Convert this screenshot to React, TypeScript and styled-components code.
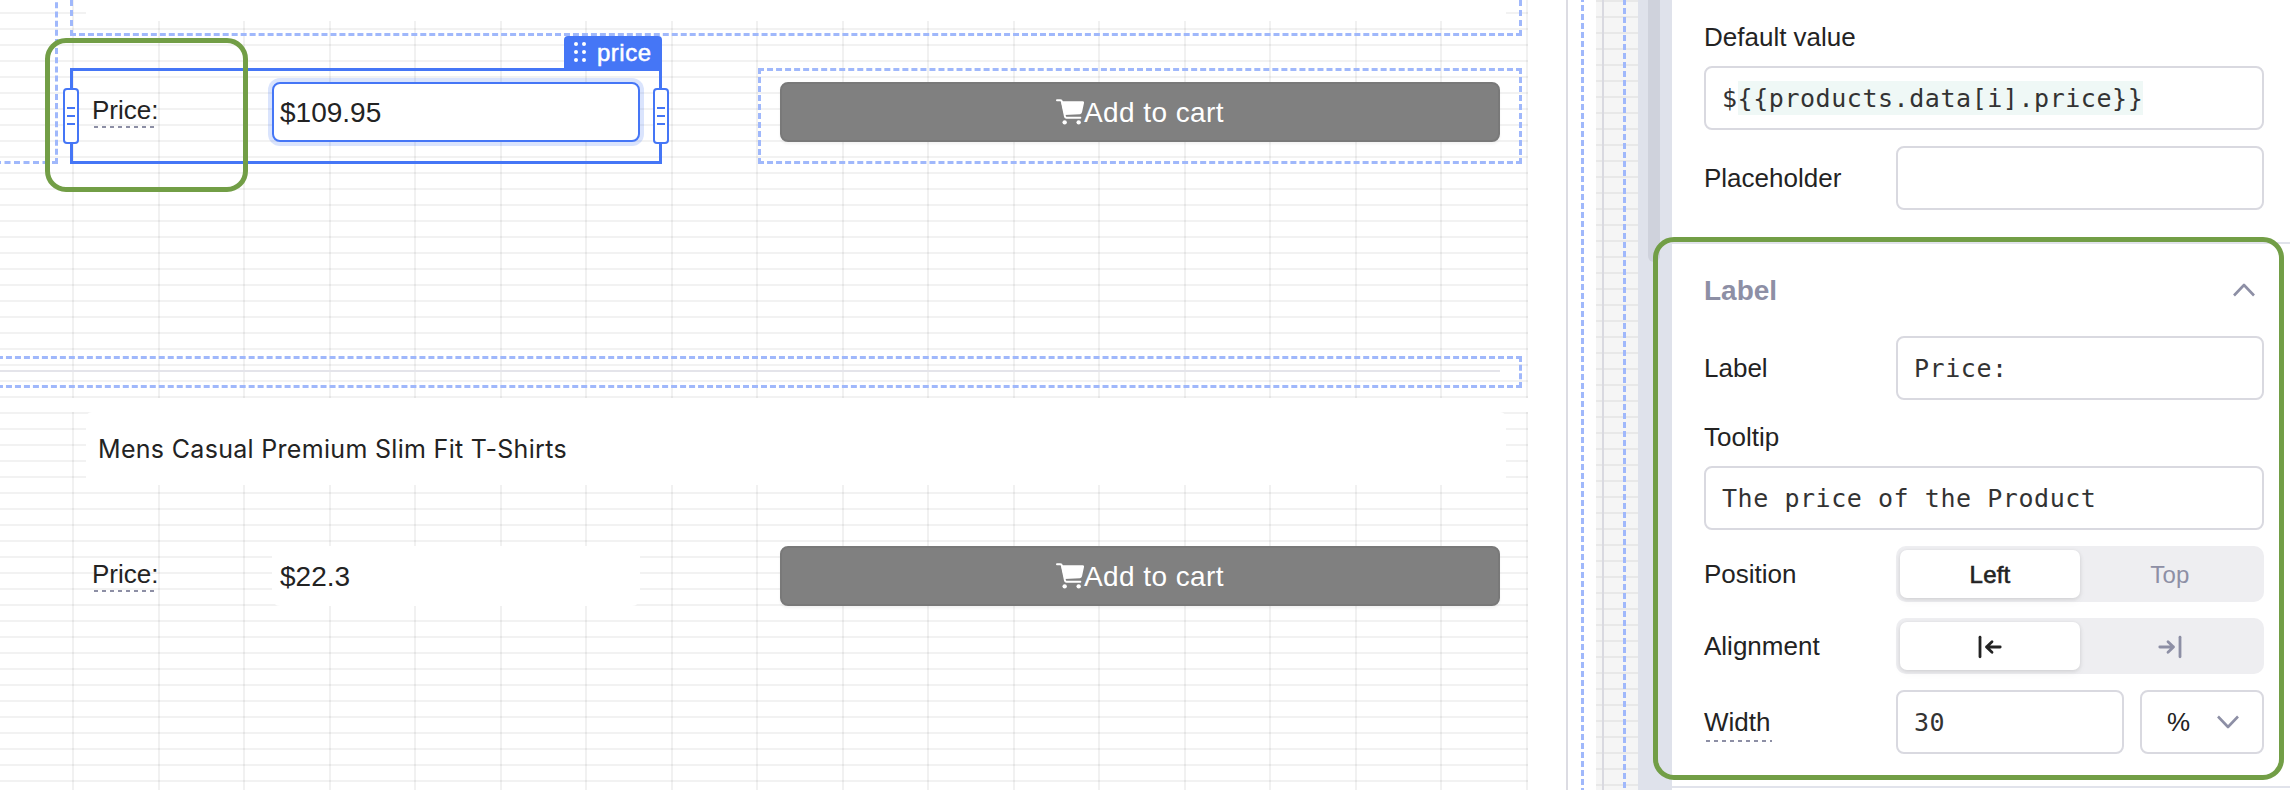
import React from "react";
import styled, { createGlobalStyle, css } from "styled-components";

const BLUE = "#4576f6";
const DASH = "#a0b8fb";
const GREEN = "#729e46";
const MUTED = "#8d8fa5";
const INK = "#232323";
const LINE = "#d9d9e0";

const GlobalStyle = createGlobalStyle`
  * { box-sizing: border-box; }
  body {
    margin: 0;
    overflow: hidden;
    background: #fff;
    color: ${INK};
    font-family: "Liberation Sans", Arial, sans-serif;
    font-size: 26px;
    line-height: 30px;
  }
`;

const Editor = styled.div`
  position: relative;
  display: flex;
  width: 2290px;
  height: 790px;
  overflow: hidden;
`;

/* ---------- Canvas ---------- */

const Canvas = styled.main`
  display: flex;
  flex-direction: column;
  gap: 14px;
  width: 1568px;
  border-right: 2px solid #dcdce3;
`;

const ListItem = styled.section<{ $height: number; $gridOffset: number }>`
  position: relative;
  z-index: 0;
  flex: none;
  width: 1528px;
  height: ${(p) => p.$height}px;
  overflow: hidden;
  background-image: linear-gradient(#f2f2f2 2px, transparent 2px);
  background-size: 100% 16px;
  background-position: 0 ${(p) => p.$gridOffset}px;
`;

const GridColumns = styled.div`
  position: absolute;
  z-index: -1;
  inset: 0 0 0 72px;
  display: flex;
  justify-content: space-between;
`;

const GridColumn = styled.i`
  width: 2px;
  background: rgba(0, 0, 0, 0.055);
`;

const widgetBorder = css<{ $outlined?: boolean }>`
  border: 3px dashed ${(p) => (p.$outlined ? DASH : "transparent")};
`;

const TitleWidget = styled.div<{ $height: number; $outlined?: boolean }>`
  ${widgetBorder}
  display: flex;
  width: 1452px;
  height: ${(p) => p.$height}px;
  margin-left: 70px;
  padding: 0 13px 12px;
  border-top: 0;
`;

const TitleText = styled.div`
  flex: 1;
  display: flex;
  align-items: center;
  padding: 0 0 0 12px;
  border-radius: 6px 6px 0 0;
  background: #fff;
  font-family: Inter, sans-serif;
  font-size: 25px;
  letter-spacing: 0.31px;
  white-space: nowrap;
`;

const WidgetRow = styled.div`
  display: flex;
  gap: 96px;
  height: 96px;
  margin: 32px 0 0 70px;
`;

const PriceWidget = styled.div<{ $selected?: boolean }>`
  position: relative;
  display: flex;
  align-items: center;
  width: 592px;
  padding: 11px 19px 19px;
  border: 3px solid ${(p) => (p.$selected ? BLUE : "transparent")};
`;

const PriceLabel = styled.div`
  width: 180px;
`;

const HintedText = styled.span<{ $pad: number; $drop: number; $trim: number }>`
  position: relative;
  display: inline-block;
  padding-bottom: ${(p) => p.$pad}px;
  vertical-align: top;

  &::after {
    content: "";
    position: absolute;
    left: 2px;
    right: ${(p) => p.$trim}px;
    bottom: ${(p) => p.$drop}px;
    height: 2px;
    background: repeating-linear-gradient(90deg, ${MUTED} 0 4px, transparent 4px 8px);
  }
`;

const PriceInput = styled.div<{ $focused?: boolean }>`
  flex: 1;
  display: flex;
  align-items: center;
  height: 60px;
  padding: 1px 6px 0;
  border: 2px solid ${(p) => (p.$focused ? BLUE : "#fff")};
  border-radius: 8px;
  background: #fff;
  box-shadow: ${(p) => (p.$focused ? "0 0 0 4px rgba(69, 118, 246, 0.2)" : "none")};
  font-size: 28px;
`;

const ButtonWidget = styled.div<{ $outlined?: boolean }>`
  ${widgetBorder}
  width: 764px;
  padding: 11px 19px;
`;

const CartButton = styled.button`
  display: flex;
  align-items: center;
  justify-content: center;
  width: 100%;
  height: 60px;
  padding: 1px 0 0;
  border: 2px solid #797979;
  border-radius: 8px;
  background: #808080;
  box-shadow: 0 2px 3px rgba(0, 0, 0, 0.05);
  color: #fff;
  font: 28px/32px "Liberation Sans", Arial, sans-serif;
  letter-spacing: 0.42px;

  svg {
    flex: none;
    margin-top: -1px;
  }
`;

const DividerWidget = styled.div`
  ${widgetBorder}
  width: 1552px;
  height: 32px;
  margin: 192px 0 0 -30px;
  padding: 11px 19px;

  hr {
    height: 2px;
    margin: 0;
    border: 0;
    background: #e4e4ea;
  }
`;

const NeighbourOutline = styled.div`
  position: absolute;
  top: -16px;
  left: -24px;
  width: 82px;
  height: 180px;
  border: 3px dashed ${DASH};
`;

const NameTag = styled.div`
  position: absolute;
  top: -35px;
  right: -3px;
  display: flex;
  align-items: center;
  gap: 11px;
  width: 98px;
  height: 35px;
  padding: 0 0 2px 10px;
  border-radius: 4px 4px 0 0;
  background: ${BLUE};
  color: #fff;
  font-size: 24px;
  letter-spacing: 0.5px;
  -webkit-text-stroke: 0.5px #fff;

  svg {
    flex: none;
    margin-top: -1px;
  }
`;

const ResizeHandle = styled.div<{ $side: "left" | "right" }>`
  position: absolute;
  top: 17px;
  ${(p) => p.$side}: -10px;
  display: flex;
  flex-direction: column;
  align-items: center;
  justify-content: center;
  gap: 6px;
  width: 16px;
  height: 56px;
  border: 2px solid ${BLUE};
  border-radius: 4px;
  background: #fff;

  i {
    width: 8px;
    height: 2px;
    background: ${BLUE};
  }
`;

/* ---------- Canvas edge ---------- */

const Gutter = styled.div`
  display: flex;
  width: 28px;
  padding-left: 13px;
`;

const GridStrip = styled.div`
  display: flex;
  width: 42px;
  padding-left: 6px;
  background: linear-gradient(#e8e8e8 2px, #f5f5f5 2px) 0 0 / 100% 16px;
`;

const EdgeLine = styled.i`
  width: 2px;
  margin-right: 19px;
  background: #d9d9e0;
`;

const DashedGuide = styled.i<{ $phase: number }>`
  width: 3px;
  background: repeating-linear-gradient(${DASH} 0 6px, transparent 6px 9px) 0 ${(p) => p.$phase}px / 3px 900px;
`;

const ScrollTrack = styled.div`
  width: 34px;
  padding-left: 10px;
  background: #dfe2eb;
`;

const ScrollThumb = styled.div`
  width: 12px;
  height: 262px;
  border-radius: 0 0 6px 6px;
  background: #cfd2dc;
`;

/* ---------- Property panel ---------- */

const Panel = styled.aside`
  flex: 1;
  background: #fff;
`;

const PanelSection = styled.section`
  display: flex;
  flex-direction: column;
  padding: 0 26px 32px 32px;
  border-bottom: 2px solid #e1e3eb;
`;

const StackedLabel = styled.label`
  height: 66px;
  padding-top: 22px;
`;

const SectionHeader = styled.header`
  display: flex;
  align-items: center;
  justify-content: space-between;
  height: 92px;
  padding: 1px 9px 0 0;
  color: ${MUTED};
  font-size: 28px;
  font-weight: 700;

  svg {
    margin-top: -2px;
  }
`;

const Field = styled.div`
  display: flex;
  align-items: center;
`;

const FieldStack = styled.div`
  display: flex;
  flex-direction: column;
  gap: 16px;
`;

const FieldLabel = styled.label`
  width: 192px;
`;

const CodeInput = styled.div`
  display: flex;
  align-items: center;
  flex: 1 1 auto;
  height: 64px;
  min-height: 64px;
  padding: 0 16px;
  border: 2px solid ${LINE};
  border-radius: 8px;
  background: #fff;
  color: #333;
  font-family: "DejaVu Sans Mono", monospace;
  font-size: 25px;
  letter-spacing: 0.55px;
  white-space: pre;
`;

const CodeText = styled.span`
  display: block;
  height: 34px;
  padding-top: 3px;
`;

const Binding = styled(CodeText)`
  background: #eff8f6;
`;

const Segmented = styled.div`
  flex: 1;
  display: flex;
  height: 56px;
  padding: 4px;
  border-radius: 10px;
  background: #eeeef1;
`;

const Segment = styled.div<{ $active?: boolean }>`
  flex: 1;
  display: flex;
  align-items: center;
  justify-content: center;
  padding-top: 1px;
  border-radius: 7px;
  color: ${MUTED};
  font-size: 24px;
  letter-spacing: 0.2px;
  ${(p) =>
    p.$active &&
    css`
      background: #fff;
      box-shadow: 0 1px 4px rgba(0, 0, 0, 0.12), 0 4px 10px rgba(0, 0, 0, 0.03);
      color: ${INK};
      -webkit-text-stroke: 0.6px ${INK};
    `}
`;

const UnitSelect = styled.div`
  display: flex;
  align-items: center;
  justify-content: space-between;
  width: 124px;
  height: 64px;
  margin-left: 16px;
  padding: 0 23px 0 25px;
  border: 2px solid ${LINE};
  border-radius: 8px;
`;

const Callout = styled.div<{ $x: number; $y: number; $w: number; $h: number }>`
  position: absolute;
  left: ${(p) => p.$x}px;
  top: ${(p) => p.$y}px;
  width: ${(p) => p.$w}px;
  height: ${(p) => p.$h}px;
  border: 5px solid ${GREEN};
  border-radius: 21px;
`;

/* ---------- Icons ---------- */

const CartIcon = () => (
  <svg width="28" height="26" viewBox="0 0 84 78" fill="#fff">
    <path
      d="M3 4H13Q17 4 18 9L27 53Q28 56 31 56H73"
      fill="none"
      stroke="#fff"
      strokeWidth="6"
      strokeLinecap="round"
      strokeLinejoin="round"
    />
    <path d="M15 7H80Q85 7 84 12L78 40Q77 45 72 45.500L25 48Z" />
    <circle cx="26" cy="70" r="6.500" />
    <circle cx="68" cy="70" r="6.500" />
  </svg>
);

const DragDots = () => (
  <svg width="12" height="20" viewBox="0 0 12 20" fill="#fff">
    {[2, 10, 18].map((y) => (
      <React.Fragment key={y}>
        <circle cx="2" cy={y} r="2" />
        <circle cx="10" cy={y} r="2" />
      </React.Fragment>
    ))}
  </svg>
);

const Chevron = ({ up }: { up?: boolean }) => (
  <svg width="22" height="14" viewBox="0 0 22 14" fill="none" stroke={MUTED} strokeWidth="2.600">
    <path d={up ? "M1 12.500L11 2L21 12.500" : "M1 1.500L11 12L21 1.500"} strokeLinejoin="round" />
  </svg>
);

const AlignIcon = ({ end }: { end?: boolean }) => (
  <svg width="24" height="24" viewBox="0 0 24 24" fill="none" stroke="currentColor" strokeWidth="2.800" strokeLinecap="round" strokeLinejoin="round">
    <g transform={end ? "matrix(-1 0 0 1 24 0)" : undefined}>
      <path d="M2 2.200V21.800" />
      <path d="M22.200 12H8.500M14 6.800L8.500 12L14 17.200" />
    </g>
  </svg>
);

/* ---------- Composition ---------- */

const Grid = () => (
  <GridColumns>
    {Array.from({ length: 18 }, (_, i) => (
      <GridColumn key={i} />
    ))}
  </GridColumns>
);

const Handle = ({ side }: { side: "left" | "right" }) => (
  <ResizeHandle $side={side}>
    <i />
    <i />
    <i />
  </ResizeHandle>
);

const ProductRow = ({ price, selected }: { price: string; selected?: boolean }) => (
  <WidgetRow>
    <PriceWidget $selected={selected}>
      <PriceLabel>
        <HintedText $pad={4} $drop={1} $trim={3}>Price:</HintedText>
      </PriceLabel>
      <PriceInput $focused={selected}>{price}</PriceInput>
      {selected && (
        <>
          <NameTag>
            <DragDots />
            price
          </NameTag>
          <Handle side="left" />
          <Handle side="right" />
        </>
      )}
    </PriceWidget>
    <ButtonWidget $outlined={selected}>
      <CartButton>
        <CartIcon />
        Add to cart
      </CartButton>
    </ButtonWidget>
  </WidgetRow>
);

export default function App() {
  return (
    <>
      <GlobalStyle />
      <Editor>
        <Canvas>
          <ListItem $height={398} $gridOffset={12}>
            <Grid />
            <NeighbourOutline />
            <TitleWidget $height={36} $outlined>
              <TitleText />
            </TitleWidget>
            <ProductRow price="$109.95" selected />
            <DividerWidget $outlined>
              <hr />
            </DividerWidget>
          </ListItem>
          <ListItem $height={378} $gridOffset={0}>
            <Grid />
            <TitleWidget $height={88}>
              <TitleText>Mens Casual Premium Slim Fit T-Shirts</TitleText>
            </TitleWidget>
            <ProductRow price="$22.3" />
          </ListItem>
        </Canvas>

        <Gutter>
          <DashedGuide $phase={-4} />
        </Gutter>
        <GridStrip>
          <EdgeLine />
          <DashedGuide $phase={-1} />
        </GridStrip>
        <ScrollTrack>
          <ScrollThumb />
        </ScrollTrack>

        <Panel>
          <PanelSection>
            <StackedLabel>Default value</StackedLabel>
            <FieldStack>
              <CodeInput>
                <CodeText>$</CodeText>
                <Binding>{"{{products.data[i].price}}"}</Binding>
              </CodeInput>
              <Field>
                <FieldLabel>Placeholder</FieldLabel>
                <CodeInput />
              </Field>
            </FieldStack>
          </PanelSection>

          <PanelSection>
            <SectionHeader>
              Label
              <Chevron up />
            </SectionHeader>
            <Field>
              <FieldLabel>Label</FieldLabel>
              <CodeInput>
                <CodeText>Price:</CodeText>
              </CodeInput>
            </Field>
            <StackedLabel>Tooltip</StackedLabel>
            <FieldStack>
              <CodeInput>
                <CodeText>The price of the Product</CodeText>
              </CodeInput>
              <Field>
                <FieldLabel>Position</FieldLabel>
                <Segmented>
                  <Segment $active>Left</Segment>
                  <Segment>Top</Segment>
                </Segmented>
              </Field>
              <Field>
                <FieldLabel>Alignment</FieldLabel>
                <Segmented>
                  <Segment $active>
                    <AlignIcon />
                  </Segment>
                  <Segment>
                    <AlignIcon end />
                  </Segment>
                </Segmented>
              </Field>
              <Field>
                <FieldLabel>
                  <HintedText $pad={0} $drop={-5} $trim={-2}>Width</HintedText>
                </FieldLabel>
                <CodeInput>
                  <CodeText>30</CodeText>
                </CodeInput>
                <UnitSelect>
                  %
                  <Chevron />
                </UnitSelect>
              </Field>
            </FieldStack>
          </PanelSection>
        </Panel>

        <Callout $x={45} $y={38} $w={203} $h={154} />
        <Callout $x={1653} $y={237} $w={631} $h={543} />
      </Editor>
    </>
  );
}
